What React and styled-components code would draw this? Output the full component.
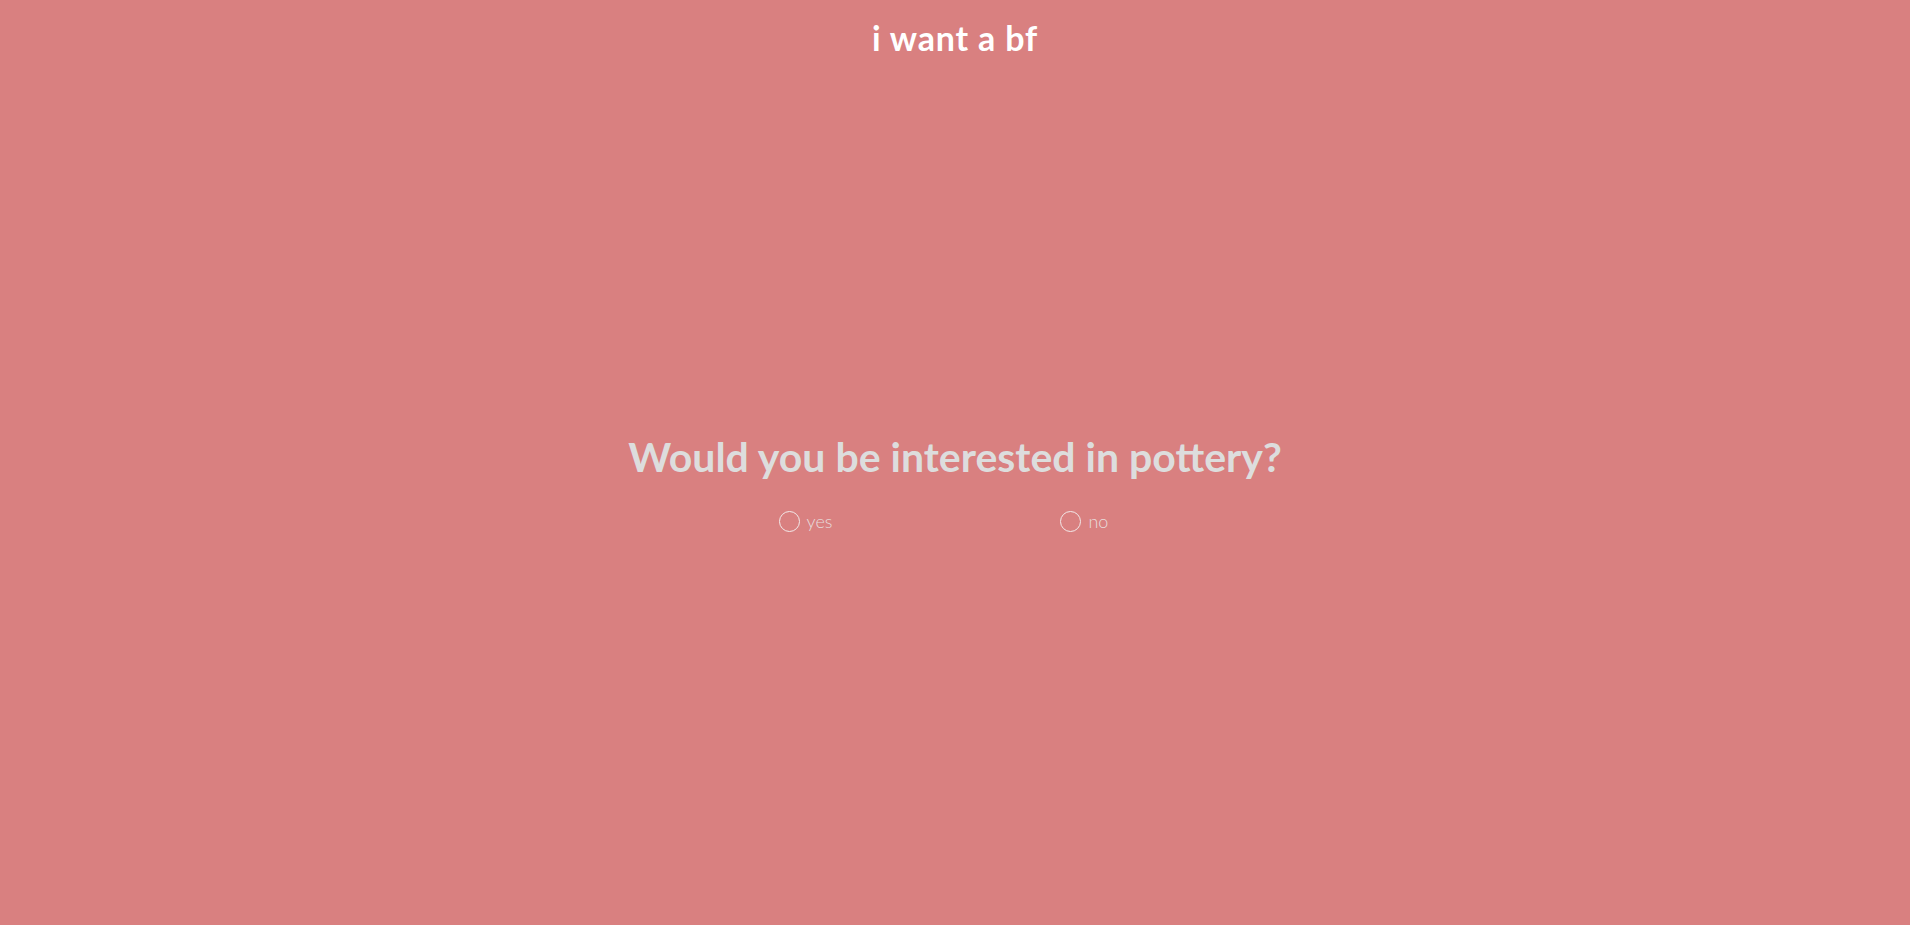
import React, {useState} from 'react';
import styled, {createGlobalStyle} from 'styled-components';

const GlobalStyle = createGlobalStyle`
  html, body {
    margin: 0;
    padding: 0;
    background-color: #d98080;
  }
  body {
    font-family: Lato, "Open Sans", sans-serif;
  }
`;

const Page = styled.div`
  min-height: 925px;
  background-color: #d98080;
  display: flex;
  flex-direction: column;
  align-items: center;
`;

const Header = styled.h1`
  margin: 0;
  padding-top: 17px;
  font-size: 34px;
  font-weight: 700;
  line-height: 42px;
  letter-spacing: 0.8px;
  color: #ffffff;
  text-align: center;
`;

const Question = styled.section`
  margin-top: 372px;
  display: flex;
  flex-direction: column;
  align-items: center;
`;

const Prompt = styled.h2`
  margin: 0;
  font-size: 41px;
  font-weight: 700;
  line-height: 52px;
  color: #dddddd;
  text-align: center;
`;

const Options = styled.div`
  margin-top: 27px;
  display: flex;
  justify-content: center;
  gap: 228px;
  padding-right: 23px;
`;

const Option = styled.label`
  display: flex;
  align-items: center;
  gap: 7px;
  font-size: 18px;
  font-weight: 300;
  color: #e8dcdc;
  cursor: pointer;
`;

const Radio = styled.span`
  width: 19px;
  height: 19px;
  border-radius: 50%;
  border: 1.5px solid #f3eaea;
  background-color: ${props => (props.checked ? '#f3eaea' : 'transparent')};
`;

const Hidden = styled.input`
  display: none;
`;

export default function App() {
  const [answer, setAnswer] = useState(null);
  const choices = ['yes', 'no'];

  return (
    <Page>
      <GlobalStyle />
      <Header>i want a bf</Header>
      <Question>
        <Prompt>Would you be interested in pottery?</Prompt>
        <Options>
          {choices.map(choice => (
            <Option key={choice}>
              <Hidden
                type="radio"
                name="pottery"
                value={choice}
                checked={answer === choice}
                onChange={() => setAnswer(choice)}
              />
              <Radio checked={answer === choice} />
              {choice}
            </Option>
          ))}
        </Options>
      </Question>
    </Page>
  );
}
